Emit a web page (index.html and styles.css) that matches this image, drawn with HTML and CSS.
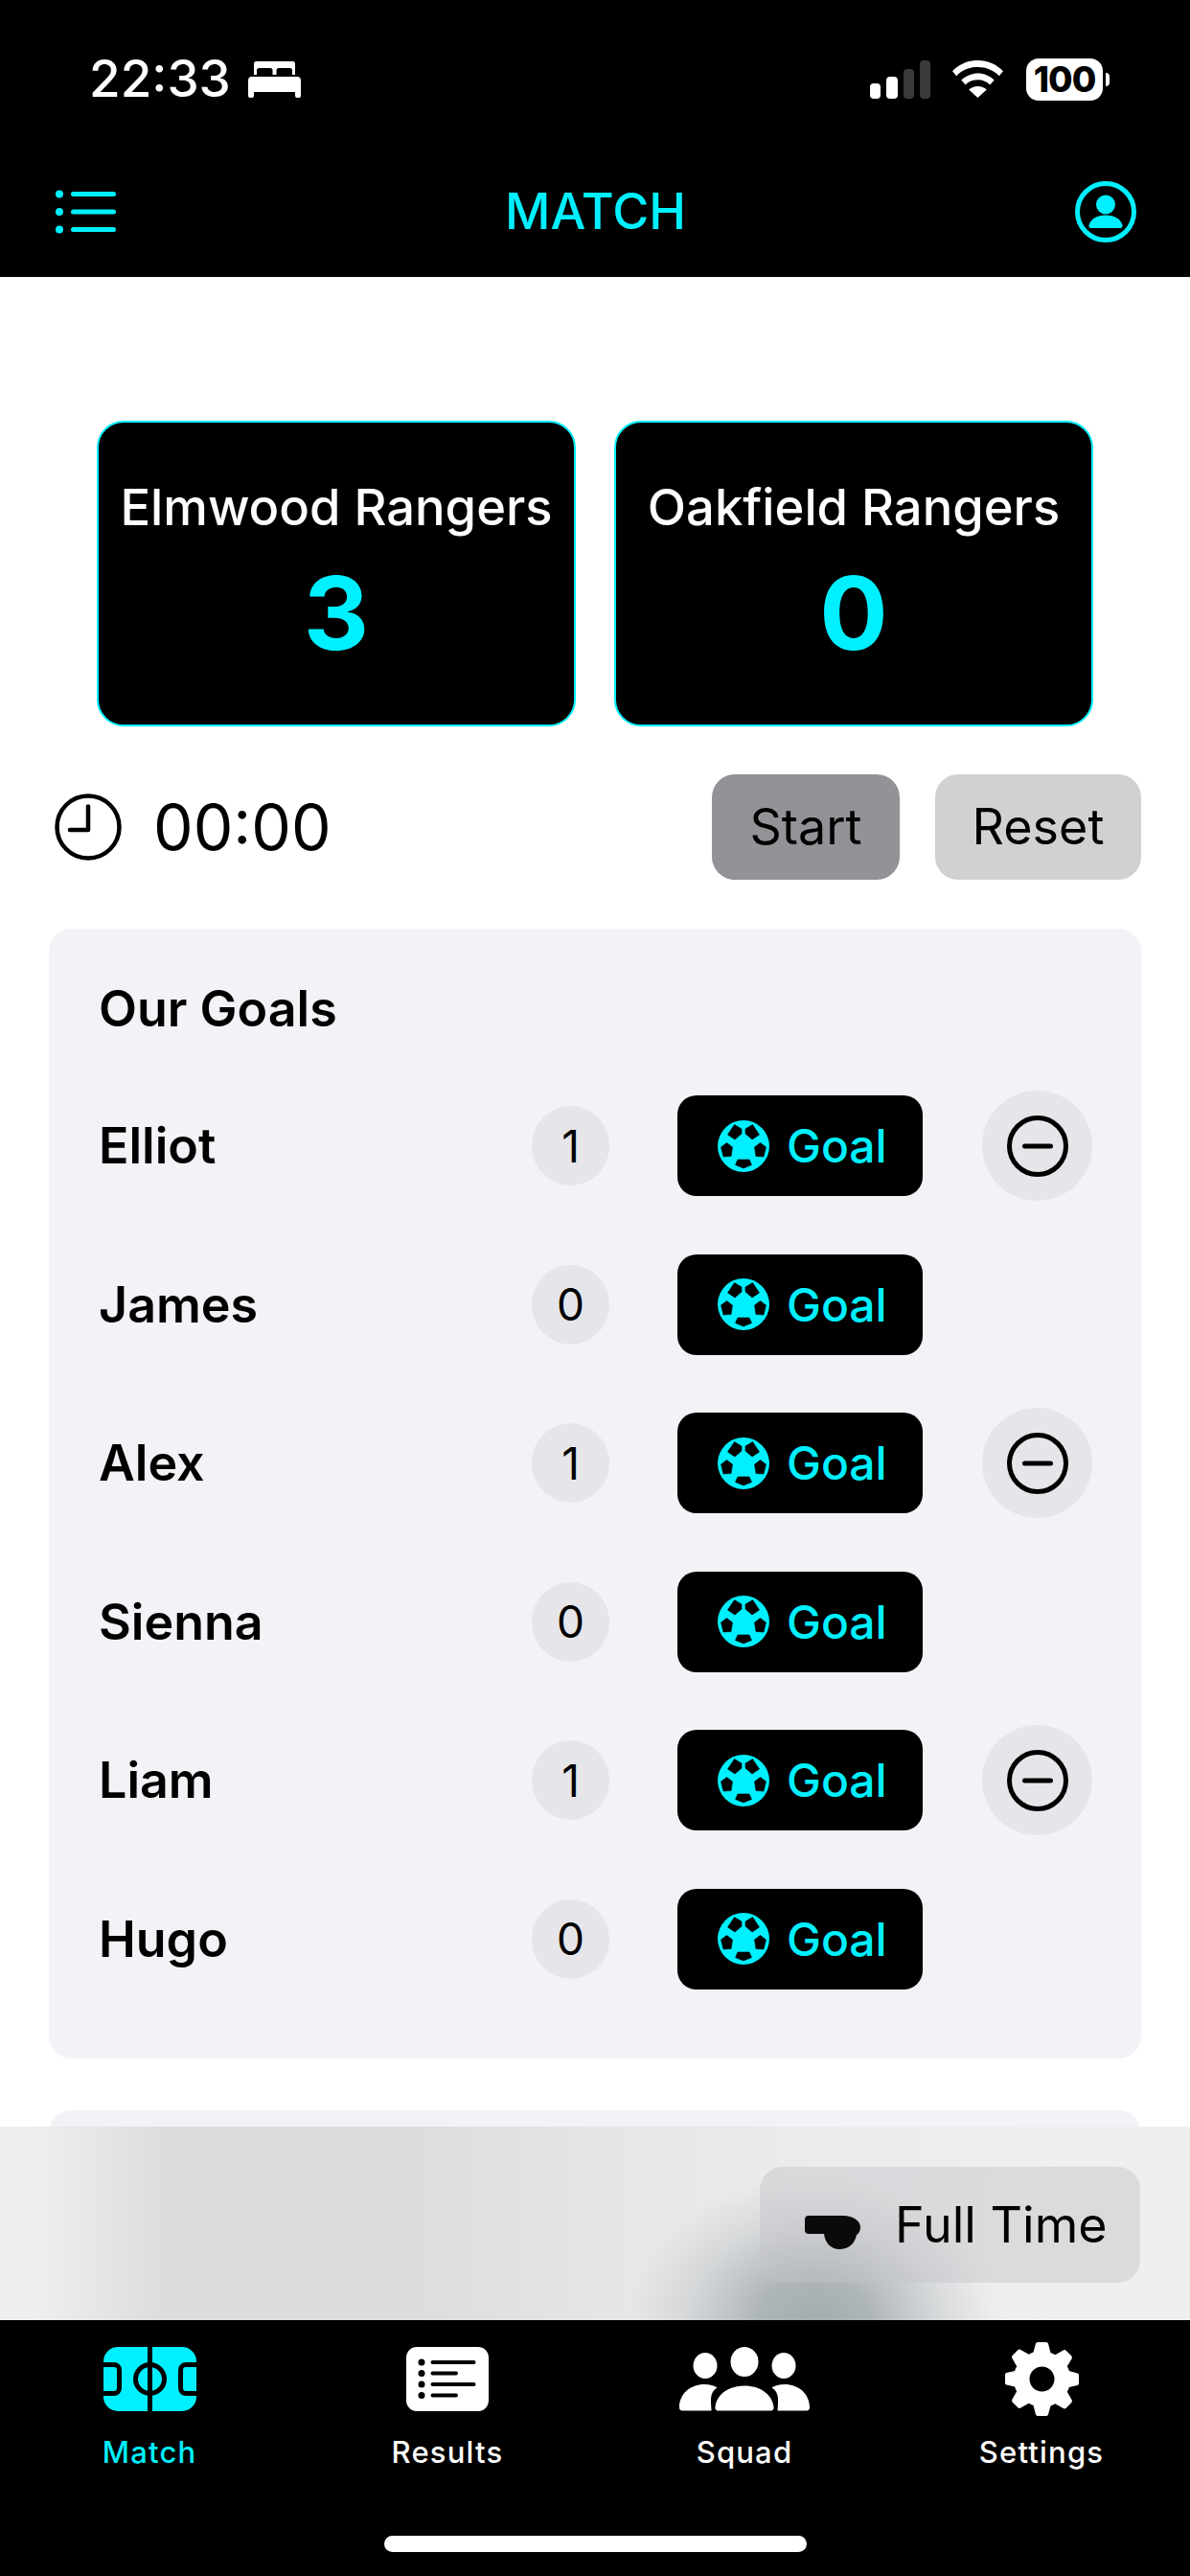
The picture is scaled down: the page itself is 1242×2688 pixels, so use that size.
FILE: index.html
```html
<!DOCTYPE html>
<html lang="en">
<head>
<meta charset="utf-8">
<title>Match</title>
<link rel="stylesheet" href="styles.css">
</head>
<body>
<svg class="defs" width="0" height="0" aria-hidden="true">
  <symbol id="ball" viewBox="0 0 54 54">
    <circle cx="27" cy="27" r="27" fill="#00f0ff"/>
    <g fill="#000" stroke="#000" stroke-width=".6" stroke-linejoin="round">
      <polygon points="17.500,4.500 25,9 25,14 18,20 10.500,15"/>
      <polygon points="36.500,4.500 29,9 29,14 36,20 43.500,15"/>
      <polygon points="3.500,28 9.500,23.500 15.500,28 14,37.500 6,38"/>
      <polygon points="50.500,28 44.500,23.500 38.500,28 40,37.500 48,38"/>
      <polygon points="21,41 33,41 35.500,46.500 27,50 18.500,46.500"/>
    </g>
  </symbol>
  <symbol id="minus" viewBox="0 0 64 64">
    <circle cx="32" cy="32" r="29.500" fill="none" stroke="#000" stroke-width="5"/>
    <rect x="16" y="29.500" width="32" height="5" rx="2.500" fill="#000"/>
  </symbol>
</svg>

<div class="screen">
  <header class="top">
    <div class="status">
      <div class="status-left">
        <span class="clock-time">22:33</span>
        <svg class="bed" viewBox="0 0 55 38"><path fill="#fff" d="M6 2.500A2.500 2.500 0 0 1 8.500 0h38A2.500 2.500 0 0 1 49 2.500V14h-3V9.500A2.500 2.500 0 0 0 43.500 7H32a2.500 2.500 0 0 0-2.500 2.500V14h-4V9.500A2.500 2.500 0 0 0 23 7H11.500A2.500 2.500 0 0 0 9 9.500V14H6zM4 16h47a4 4 0 0 1 4 4v16a2 2 0 0 1-2 2h-2a2 2 0 0 1-2-2v-4H6v4a2 2 0 0 1-2 2H2a2 2 0 0 1-2-2V20a4 4 0 0 1 4-4z"/></svg>
      </div>
      <div class="status-right">
        <svg class="signal" viewBox="0 0 63 40">
          <rect x="0" y="24" width="11" height="16" rx="4" fill="#fff"/>
          <rect x="17" y="17" width="12" height="23" rx="4" fill="#fff"/>
          <rect x="35" y="9" width="11" height="31" rx="4" fill="#3a3a3c"/>
          <rect x="52" y="0" width="11" height="40" rx="4" fill="#3a3a3c"/>
        </svg>
        <svg class="wifi" viewBox="0 0 53 39"><path fill="#fff" d="M26.500 0C37 0 46 4.200 53 11.200l-4.200 5C43 10.300 35.300 7 26.500 7S10 10.300 4.200 16.200L0 11.200C7 4.200 16 0 26.500 0zm0 13.500c6.700 0 12.600 2.700 17.200 7l-4.300 5c-3.400-3.300-8-5.300-12.900-5.300s-9.500 2-12.900 5.300l-4.300-5c4.600-4.300 10.500-7 17.200-7zm0 13.500c3.600 0 6.800 1.300 9.300 3.600L26.500 39l-9.300-8.400c2.500-2.300 5.700-3.600 9.300-3.600z"/></svg>
        <div class="battery"><span class="battery-body">100</span><span class="battery-nub"></span></div>
      </div>
    </div>
    <div class="navbar">
      <svg class="menu-icon" viewBox="0 0 63 46">
        <g fill="#00f0ff">
          <circle cx="4" cy="4.500" r="4"/><circle cx="4" cy="23" r="4"/><circle cx="4" cy="41.500" r="4"/>
          <rect x="16" y="2" width="47" height="5" rx="2.500"/><rect x="16" y="20.500" width="47" height="5" rx="2.500"/><rect x="16" y="39" width="47" height="5" rx="2.500"/>
        </g>
      </svg>
      <h1 class="nav-title">MATCH</h1>
      <svg class="profile-icon" viewBox="0 0 64 64">
        <circle cx="32" cy="32" r="29.500" fill="none" stroke="#00f0ff" stroke-width="5"/>
        <circle cx="32" cy="24.500" r="10" fill="#00f0ff"/>
        <path fill="#00f0ff" d="M14.500 46c2-7 9-10.500 17.500-10.500S47.500 39 49.500 46c.4 1.500-.5 3-2 3h-31c-1.500 0-2.400-1.500-2-3z"/>
      </svg>
    </div>
  </header>

  <main class="content">
    <section class="scores">
      <div class="score-card">
        <div class="team">Elmwood Rangers</div>
        <div class="score">3</div>
      </div>
      <div class="score-card">
        <div class="team">Oakfield Rangers</div>
        <div class="score">0</div>
      </div>
    </section>

    <section class="timer">
      <svg class="timer-icon" viewBox="0 0 70 70">
        <circle cx="35" cy="35" r="32.500" fill="none" stroke="#000" stroke-width="4.500"/>
        <path d="M35 13.500V38H16" fill="none" stroke="#000" stroke-width="4.500" stroke-linecap="round" stroke-linejoin="round"/>
      </svg>
      <span class="timer-value">00:00</span>
      <button class="btn btn-start">Start</button>
      <button class="btn btn-reset">Reset</button>
    </section>

    <section class="panel">
      <h2 class="panel-title">Our Goals</h2>
      <div class="players">
        <div class="player"><span class="name">Elliot</span><span class="count">1</span><span class="goal"><svg class="ball"><use href="#ball"/></svg>Goal</span><span class="remove"><svg class="minus"><use href="#minus"/></svg></span></div>
        <div class="player"><span class="name">James</span><span class="count">0</span><span class="goal"><svg class="ball"><use href="#ball"/></svg>Goal</span></div>
        <div class="player"><span class="name">Alex</span><span class="count">1</span><span class="goal"><svg class="ball"><use href="#ball"/></svg>Goal</span><span class="remove"><svg class="minus"><use href="#minus"/></svg></span></div>
        <div class="player"><span class="name">Sienna</span><span class="count">0</span><span class="goal"><svg class="ball"><use href="#ball"/></svg>Goal</span></div>
        <div class="player"><span class="name">Liam</span><span class="count">1</span><span class="goal"><svg class="ball"><use href="#ball"/></svg>Goal</span><span class="remove"><svg class="minus"><use href="#minus"/></svg></span></div>
        <div class="player"><span class="name">Hugo</span><span class="count">0</span><span class="goal"><svg class="ball"><use href="#ball"/></svg>Goal</span></div>
      </div>
    </section>
    <section class="panel panel-next"></section>

    <div class="fulltime-bar">
      <button class="btn-fulltime">
        <svg class="whistle" viewBox="0 0 58 35"><path fill="#0a0a0a" d="M4 0h36c10 0 18 5 18 12 0 4-2 7-4 8C52 30 45 35 36 35c-9 0-15-7-16-16H4c-2.500 0-4-1.500-4-4V4c0-2.500 1.500-4 4-4z"/></svg>
        <span>Full Time</span>
      </button>
    </div>
  </main>

  <nav class="tabs">
    <div class="tab tab-active">
      <svg class="tab-icon" width="97" height="67" viewBox="0 0 97 67">
        <rect width="97" height="67" rx="15" fill="#00f0ff"/>
        <rect x="46" width="5" height="67" fill="#000"/>
        <circle cx="48.500" cy="33.500" r="15" fill="none" stroke="#000" stroke-width="5"/>
        <path d="M-3 18.500H11a5.500 5.500 0 0 1 5.500 5.500v19a5.500 5.500 0 0 1-5.500 5.500H-3" fill="none" stroke="#000" stroke-width="5"/>
        <path d="M100 18.500H86a5.500 5.500 0 0 0-5.500 5.500v19a5.500 5.500 0 0 0 5.500 5.500H100" fill="none" stroke="#000" stroke-width="5"/>
      </svg>
      <span>Match</span>
    </div>
    <div class="tab">
      <svg class="tab-icon" width="86" height="67" viewBox="0 0 86 67">
        <rect width="86" height="67" rx="11" fill="#fff"/>
        <g fill="#000">
          <circle cx="16" cy="16" r="3.500"/><circle cx="16" cy="27.500" r="3.500"/><circle cx="16" cy="39" r="3.500"/><circle cx="16" cy="50.500" r="3.500"/>
          <rect x="25.500" y="14" width="47" height="4" rx="2"/><rect x="25.500" y="25.500" width="28.500" height="4" rx="2"/><rect x="25.500" y="37" width="47" height="4" rx="2"/><rect x="25.500" y="48.500" width="28.500" height="4" rx="2"/>
        </g>
      </svg>
      <span>Results</span>
    </div>
    <div class="tab">
      <svg class="tab-icon" width="136" height="66" viewBox="0 0 136 66">
        <g fill="#fff">
          <ellipse cx="27" cy="19" rx="12.500" ry="13.500"/>
          <ellipse cx="68" cy="15" rx="14.500" ry="15.500"/>
          <ellipse cx="109" cy="19" rx="12.500" ry="13.500"/>
          <path d="M3 66c-2 0-3-1.500-3-3.500C0 48 12 38.500 26 38.500c6 0 10.500 1.500 13.500 3.500C31 47 33 56 33.500 66z"/>
          <path d="M41 66c-2.500 0-4-1.500-3.500-4 1.500-13 14-22 30.500-22s29 9 30.500 22c.5 2.500-1 4-3.500 4z"/>
          <path d="M133 66c2 0 3-1.500 3-3.500 0-14.500-12-24-26-24-6 0-10.500 1.500-13.500 3.500 8.500 5 6.500 14 6 24z"/>
        </g>
      </svg>
      <span>Squad</span>
    </div>
    <div class="tab">
      <svg class="tab-icon gear" width="77" height="77" viewBox="0 0 77 77">
        <path fill="#fff" fill-rule="evenodd" d="M32 1.500C32.500.500 33.500 0 34.500 0h8c1 0 2 .5 2.500 1.500l2.500 9.500c1.700.6 3.200 1.300 4.700 2.200l8.500-4.800c1-.5 2-.4 3 .3l5.500 5.600c.7.800.9 1.900.4 2.900L64.800 25.200c.9 1.500 1.600 3.100 2.100 4.800l8.600 2.500c1 .3 1.500 1.200 1.500 2.200v8c0 1-.6 2-1.500 2.300L66.900 47c-.5 1.700-1.200 3.300-2.100 4.800l4.800 8.500c.5 1 .3 2.100-.4 2.900l-5.500 5.600c-.8.700-2 .8-3 .3l-8.500-4.800c-1.500.9-3 1.600-4.700 2.200L45 75.500c-.5 1-1.500 1.500-2.500 1.500h-8c-1 0-2-.5-2.500-1.500L29.500 66c-1.700-.6-3.200-1.300-4.700-2.200l-8.500 4.800c-1 .5-2.200.4-3-.3l-5.500-5.600c-.7-.8-.9-1.900-.4-2.900l4.800-8.500c-.9-1.500-1.600-3.100-2.100-4.800L1.500 44.500C.6 44.200 0 43.200 0 42.200v-8c0-1 .5-1.900 1.500-2.200L10.100 30c.5-1.700 1.200-3.300 2.100-4.800L7.400 16.700c-.5-1-.3-2.100.4-2.900l5.500-5.600c1-.7 2-.8 3-.3l8.500 4.800c1.500-.9 3-1.600 4.700-2.200zM38.500 25.500a13 13 0 1 0 0 26 13 13 0 0 0 0-26z"/>
      </svg>
      <span>Settings</span>
    </div>
    <div class="home-indicator"></div>
  </nav>
</div>
</body>
</html>
```

FILE: styles.css
```css
* { box-sizing: border-box; margin: 0; padding: 0; }
html, body { width: 1242px; height: 2688px; overflow: hidden; background: #fff; }
body { font-family: Inter, "Liberation Sans", sans-serif; color: #000; }
button { font: inherit; border: 0; color: inherit; }
.defs { position: absolute; }

.screen { width: 1242px; height: 2688px; display: flex; flex-direction: column; position: relative; overflow: hidden; }

/* header */
.top { height: 289px; background: #000; flex: none; }
.status { display: flex; justify-content: space-between; align-items: center; height: 165px; padding: 0 84px 0 93px; }
.status-left { display: flex; align-items: center; gap: 18px; }
.clock-time { font-size: 53px; font-weight: 500; color: #fff; line-height: 1; }
.bed { width: 55px; height: 38px; display: block; }
.status-right { display: flex; align-items: center; }
.signal { width: 63px; height: 40px; display: block; margin-right: 23px; }
.wifi { width: 53px; height: 39px; display: block; margin-right: 24px; }
.battery { display: flex; align-items: center; gap: 3px; }
.battery-body { width: 80px; height: 44px; border-radius: 13px; background: #fff; color: #000; font-size: 37px; font-weight: 800; line-height: 44px; text-align: center; letter-spacing: -1px; }
.battery-nub { width: 4px; height: 14px; background: #fff; border-radius: 0 7px 7px 0; }

.navbar { height: 124px; display: flex; align-items: center; justify-content: space-between; padding: 0 56px 13px 60px; }
.menu-icon { width: 63px; height: 46px; display: block; margin-left: -2px; }
.nav-title { font-size: 52px; font-weight: 500; color: #00f0ff; line-height: 1; }
.profile-icon { width: 64px; height: 64px; display: block; }

/* content */
.content { flex: 1; min-height: 0; position: relative; overflow: hidden; padding: 150px 51px 0; }
.scores { display: grid; grid-template-columns: 500px 500px; gap: 40px; padding-left: 50px; }
.score-card { height: 319px; background: #000; border: 2px solid #00f0ff; border-radius: 28px; display: flex; flex-direction: column; align-items: center; padding-top: 56px; }
.team { font-size: 52.500px; font-weight: 500; line-height: 64px; color: #fff; white-space: nowrap; }
.score { font-size: 106px; font-weight: 700; line-height: 110px; color: #00f0ff; margin-top: 24px; }

.timer { display: flex; align-items: center; margin-top: 50px; height: 110px; padding-left: 6px; }
.timer-icon { width: 70px; height: 70px; display: block; flex: none; }
.timer-value { font-size: 66px; font-weight: 400; margin-left: 33px; line-height: 1; margin-right: auto; }
.btn { height: 110px; border-radius: 24px; font-size: 52px; line-height: 1; text-align: center; }
.btn-start { width: 196px; background: #929297; }
.btn-reset { width: 215px; background: #d1d1d3; margin-left: 37px; }

.panel { background: #f2f2f7; border-radius: 24px; margin-top: 51px; padding: 52px 52px 0; height: 1179px; }
.panel-title { font-size: 52px; font-weight: 600; line-height: 64px; }
.players { display: flex; flex-direction: column; margin-top: 28px; }
.player { display: grid; grid-template-columns: 452px 81px 256px 115px; align-items: center; height: 165.500px; }
.name { font-size: 52px; font-weight: 600; }
.count { width: 81px; height: 83px; border-radius: 50%; background: #e5e5ea; font-size: 46px; font-weight: 400; display: flex; align-items: center; justify-content: center; }
.goal { margin-left: 71px; width: 256px; height: 105px; border-radius: 20px; background: #000; color: #00f0ff; font-size: 48px; font-weight: 500; display: flex; align-items: center; gap: 18px; padding-left: 42px; }
.ball { width: 54px; height: 54px; display: block; flex: none; }
.remove { margin-left: 133px; width: 115px; height: 115px; border-radius: 50%; background: #e5e5ea; display: flex; align-items: center; justify-content: center; }
.minus { width: 64px; height: 64px; display: block; }
.panel-next { margin-top: 54px; height: 300px; }

/* frosted bar over the list */
.fulltime-bar { position: absolute; left: 0; right: 0; bottom: 0; height: 202px; display: flex; justify-content: flex-end; align-items: flex-start; padding: 42px 52px 0 0;
  background:
    radial-gradient(ellipse 190px 150px at 850px 202px, #a4acae 0%, rgba(164,172,174,.85) 30%, rgba(164,172,174,.3) 68%, rgba(164,172,174,0) 100%),
    linear-gradient(90deg, rgba(221,221,224,0) 30px, #dddde0 170px, #dddde0 440px, rgba(221,221,224,.55) 620px, rgba(221,221,224,.25) 800px, rgba(221,221,224,0) 1100px),
    #efeff0;
}
.btn-fulltime { width: 397px; height: 121px; border-radius: 24px; background: rgba(196,196,200,.45); display: flex; align-items: center; gap: 36px; padding-left: 47px; font-size: 52px; color: #000; }
.whistle { width: 58px; height: 35px; display: block; flex: none; margin-top: 16px; }

/* tabs */
.tabs { height: 267px; flex: none; background: #000; position: relative; display: grid; grid-template-columns: 312px 310px 310px 310px; }
.tab { display: flex; flex-direction: column; align-items: center; padding-top: 28px; color: #fff; font-size: 31px; font-weight: 500; letter-spacing: 1.200px; }
.tab span { margin-top: 23px; line-height: 40px; }
.tab-icon { display: block; height: 67px; }
.tab-active { color: #00f0ff; }
.gear { height: 77px; margin-top: -5px; margin-bottom: -5px; }
.home-indicator { position: absolute; left: 401px; top: 225px; width: 441px; height: 17px; border-radius: 9px; background: #fff; }
```
